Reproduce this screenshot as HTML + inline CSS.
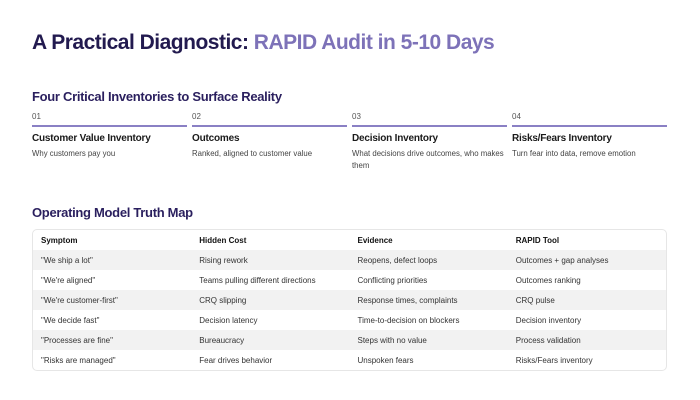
<!DOCTYPE html>
<html><head><style>
*{margin:0;padding:0;box-sizing:border-box}
body{width:700px;height:400px;background:#fff;font-family:"Liberation Sans",sans-serif;position:relative;overflow:hidden;color:#222}
.t{position:absolute;left:32px;top:31px;font-size:21px;font-weight:bold;color:#221a4f;letter-spacing:-0.5px}
.t span{color:#7d72b8}
.h{position:absolute;left:32px;font-size:13px;font-weight:bold;color:#2a1f5e;letter-spacing:-0.3px}
.col{position:absolute;top:112px;width:155px}
.n{font-size:8px;color:#555;height:12px}
.ln{height:2px;background:#8a80c4;margin-top:1px}
.ct{font-size:10px;font-weight:bold;margin-top:6px;color:#1a1a1a;letter-spacing:-0.2px}
.cd{font-size:7.8px;color:#444;margin-top:4px;line-height:12px}
table{position:absolute;left:32px;top:229px;width:635px;border:1px solid #e6e6e6;border-radius:5px;border-collapse:separate;border-spacing:0;font-size:8px;color:#333}
td{height:20px;padding-left:8px;width:25%}
tr.hd td{font-weight:bold;color:#111}
tr.g td{background:#f2f2f2}
</style></head><body>
<div class="t">A Practical Diagnostic: <span>RAPID Audit in 5-10 Days</span></div>
<div class="h" style="top:89px">Four Critical Inventories to Surface Reality</div>
<div class="col" style="left:32px"><div class="n">01</div><div class="ln"></div><div class="ct">Customer Value Inventory</div><div class="cd">Why customers pay you</div></div>
<div class="col" style="left:192px"><div class="n">02</div><div class="ln"></div><div class="ct">Outcomes</div><div class="cd">Ranked, aligned to customer value</div></div>
<div class="col" style="left:352px"><div class="n">03</div><div class="ln"></div><div class="ct">Decision Inventory</div><div class="cd">What decisions drive outcomes, who makes them</div></div>
<div class="col" style="left:512px"><div class="n">04</div><div class="ln"></div><div class="ct">Risks/Fears Inventory</div><div class="cd">Turn fear into data, remove emotion</div></div>
<div class="h" style="top:205px">Operating Model Truth Map</div>
<table>
<tr class="hd"><td>Symptom</td><td>Hidden Cost</td><td>Evidence</td><td>RAPID Tool</td></tr>
<tr class="g"><td>"We ship a lot"</td><td>Rising rework</td><td>Reopens, defect loops</td><td>Outcomes + gap analyses</td></tr>
<tr><td>"We're aligned"</td><td>Teams pulling different directions</td><td>Conflicting priorities</td><td>Outcomes ranking</td></tr>
<tr class="g"><td>"We're customer-first"</td><td>CRQ slipping</td><td>Response times, complaints</td><td>CRQ pulse</td></tr>
<tr><td>"We decide fast"</td><td>Decision latency</td><td>Time-to-decision on blockers</td><td>Decision inventory</td></tr>
<tr class="g"><td>"Processes are fine"</td><td>Bureaucracy</td><td>Steps with no value</td><td>Process validation</td></tr>
<tr><td>"Risks are managed"</td><td>Fear drives behavior</td><td>Unspoken fears</td><td>Risks/Fears inventory</td></tr>
</table>
</body></html>
